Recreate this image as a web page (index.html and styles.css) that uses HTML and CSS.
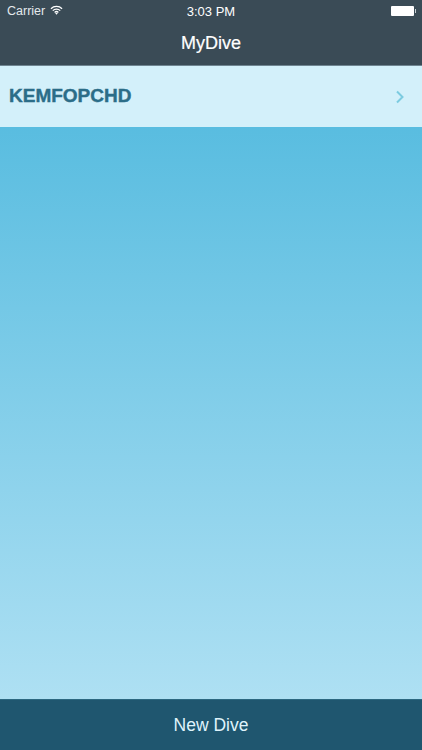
FILE: index.html
```
<!DOCTYPE html>
<html lang="en">
<head>
  <meta charset="UTF-8">
  <title>MyDive</title>
  <link rel="stylesheet" href="styles.css">
</head>
<body>
  <div class="app">
    <div class="header">
      <div class="status-bar">
        <div class="status-left">
          <span>Carrier</span>
          <svg class="wifi" width="13" height="10" viewBox="0 0 14 10">
            <path d="M1 3.6a8.5 8.5 0 0 1 12 0M3 5.7a5.6 5.6 0 0 1 8 0M5 7.6a2.9 2.9 0 0 1 4 0" fill="none" stroke="#fff" stroke-width="1.4"/>
            <path d="M7 10 5.6 8.6a2 2 0 0 1 2.8 0z" fill="#fff"/>
          </svg>
        </div>
        <span class="status-time">3:03 PM</span>
        <div class="status-right">
          <span class="battery"></span>
          <span class="battery-tip"></span>
        </div>
      </div>
      <div class="nav-title">MyDive</div>
    </div>

    <div class="list">
      <div class="dive-row">
        <span class="dive-name">KEMFOPCHD</span>
        <svg class="chevron" width="10" height="14" viewBox="0 0 10 14">
          <path d="M2 1.5 7.5 7 2 12.5" fill="none" stroke="#7ccbe0" stroke-width="2"/>
        </svg>
      </div>
    </div>

    <div class="new-dive">New Dive</div>
  </div>
</body>
</html>
```

FILE: styles.css
```
* {
  box-sizing: border-box;
}

html, body {
  margin: 0;
  height: 100%;
}

body {
  font-family: "Liberation Sans", Arial, sans-serif;
}

.app {
  display: flex;
  flex-direction: column;
  height: 750px;
  overflow: hidden;
}

.header {
  height: 66px;
  background: #3a4b56;
  color: #fff;
  border-bottom: 1px solid #6f8591;
}

.status-bar {
  display: flex;
  justify-content: space-between;
  align-items: center;
  position: relative;
  height: 22px;
  padding: 0 6px 0 7px;
  font-size: 13px;
}

.status-left {
  display: flex;
  align-items: center;
  gap: 5px;
  font-size: 12.5px;
  color: #e4e9ec;
}

.wifi {
  margin-bottom: 2px;
}

.status-time {
  position: absolute;
  left: 0;
  right: 0;
  text-align: center;
}

.status-right {
  display: flex;
  align-items: center;
}

.battery {
  width: 23px;
  height: 10px;
  background: #fff;
  border-radius: 1px;
}

.battery-tip {
  width: 1px;
  height: 4px;
  background: #c8d0d4;
  margin-left: 1px;
}

.nav-title {
  text-align: center;
  font-size: 18px;
  line-height: 22px;
  margin-top: 10px;
  -webkit-text-stroke: 0.2px #fff;
}

.list {
  flex: 1;
  background: linear-gradient(to bottom, #50b9de 0%, #aee0f3 100%);
}

.dive-row {
  display: flex;
  justify-content: space-between;
  align-items: center;
  height: 61px;
  padding: 0 17px 0 9px;
  background: #d3f0fa;
}

.dive-name {
  font-size: 19px;
  font-weight: bold;
  color: #2b6d88;
  -webkit-text-stroke: 0.4px #2b6d88;
  margin-bottom: 2px;
}

.new-dive {
  height: 51px;
  background: #1f566f;
  border-top: 1px solid #2c6881;
  color: #dff3fb;
  font-size: 17.5px;
  line-height: 51px;
  text-align: center;
}
```
